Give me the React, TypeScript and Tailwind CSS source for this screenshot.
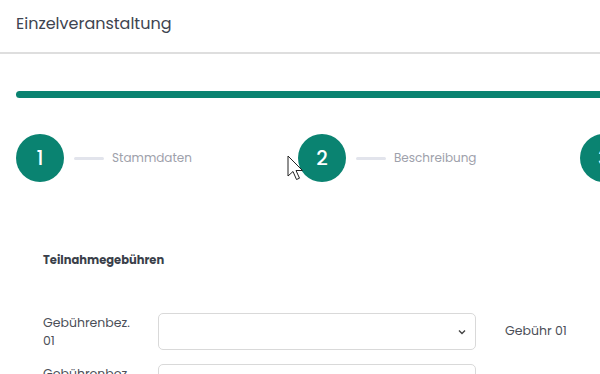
import React from "react";

const font = { fontFamily: "Poppins, 'Open Sans', 'Noto Sans', sans-serif" };

function Step({ n, label }: { n: number; label: string }) {
  return (
    <div className="flex w-[282px] shrink-0 items-center">
      <div className="flex h-12 w-12 shrink-0 items-center justify-center rounded-full bg-[#0a8371] text-[20px] font-medium text-white">
        {n}
      </div>
      <div className="ml-[10px] h-[3px] w-[30px] rounded-full bg-[#e2e4ec]" />
      <div className="ml-2 text-[12px] text-[#9ea1ab]">{label}</div>
    </div>
  );
}

function Row({ label, fee }: { label: string; fee: string }) {
  return (
    <div className="flex items-start">
      <div className="w-[115px] pr-[20px] pt-[1px] text-[12.5px] leading-[18px] text-[#4b4f58]">
        {label}
      </div>
      <div className="relative flex h-[37px] w-[318px] items-center justify-end rounded-[5px] border border-[#d9d9d9] bg-white pr-[8px]">
        <svg width="10" height="10" viewBox="0 0 10 10" fill="none">
          <path d="M2 3.5 L5 6.5 L8 3.5" stroke="#444" strokeWidth="1.4" />
        </svg>
      </div>
      <div className="ml-[29px] pt-[9px] text-[12.5px] text-[#4b4f58]">{fee}</div>
    </div>
  );
}

export default function App() {
  return (
    <div
      className="relative h-[374px] w-[600px] overflow-hidden bg-white"
      style={font}
    >
      <div className="flex h-[54px] items-start border-b-2 border-[#dedede] px-4 pt-[12px]">
        <span className="text-[16px] text-[#3e4450]">Einzelveranstaltung</span>
      </div>
      <div className="ml-4 mt-[37px] h-[7px] w-[700px] rounded-l-full bg-[#0a8371]" />
      <div className="mt-[36px] flex pl-4">
        <Step n={1} label="Stammdaten" />
        <Step n={2} label="Beschreibung" />
        <Step n={3} label="" />
      </div>
      <div className="pl-[43px] pt-[70px]">
        <div className="text-[11.5px] font-bold text-[#3a3f4a]">Teilnahmegebühren</div>
        <div className="mt-[44px] flex flex-col gap-[14px]">
          <Row label="Gebührenbez. 01" fee="Gebühr 01" />
          <Row label="Gebührenbez. 02" fee="Gebühr 02" />
        </div>
      </div>
      <svg
        className="absolute left-[287px] top-[155px]"
        width="20"
        height="28"
        viewBox="0 0 20 28"
      >
        <path
          d="M1 1 L1 21 L6 16.5 L9.5 24.5 L12.5 23.2 L9 15.5 L15.5 15.5 Z"
          fill="white"
          stroke="#222"
          strokeWidth="1"
          strokeLinejoin="round"
        />
      </svg>
    </div>
  );
}
